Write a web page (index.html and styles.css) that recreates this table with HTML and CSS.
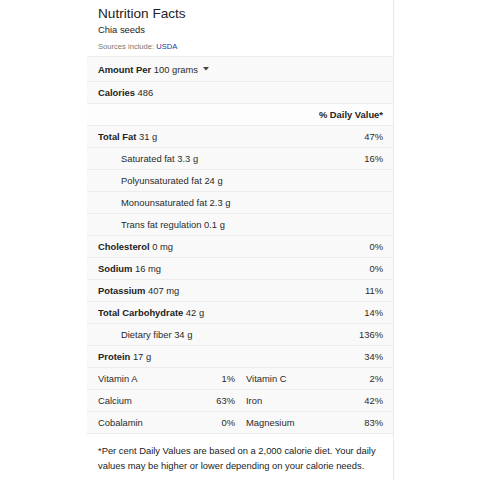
FILE: index.html
```html
<!DOCTYPE html>
<html>
<head>
<meta charset="utf-8">
<link rel="stylesheet" href="styles.css">
</head>
<body>
<div class="card">
  <div class="head">
    <div class="title">Nutrition Facts</div>
    <div class="food">Chia seeds</div>
    <div class="src">Sources include: <span class="link">USDA</span></div>
  </div>
  <div class="row amount"><span><b>Amount Per</b> 100 grams</span><svg class="caret" width="6" height="4" viewBox="0 0 6 4"><path d="M0 0H6L3 3.5Z" fill="#444"/></svg></div>
  <div class="row"><span><b>Calories</b> 486</span></div>
  <div class="row dvhead"><b>% Daily Value*</b></div>
  <div class="row"><span><b>Total Fat</b> 31 g</span><span>47%</span></div>
  <div class="row sub"><span>Saturated fat 3.3 g</span><span>16%</span></div>
  <div class="row sub"><span>Polyunsaturated fat 24 g</span></div>
  <div class="row sub"><span>Monounsaturated fat 2.3 g</span></div>
  <div class="row sub"><span>Trans fat regulation 0.1 g</span></div>
  <div class="row"><span><b>Cholesterol</b> 0 mg</span><span>0%</span></div>
  <div class="row"><span><b>Sodium</b> 16 mg</span><span>0%</span></div>
  <div class="row"><span><b>Potassium</b> 407 mg</span><span>11%</span></div>
  <div class="row"><span><b>Total Carbohydrate</b> 42 g</span><span>14%</span></div>
  <div class="row sub"><span>Dietary fiber 34 g</span><span>136%</span></div>
  <div class="row"><span><b>Protein</b> 17 g</span><span>34%</span></div>
  <div class="row vit"><div class="pair"><span>Vitamin A</span><span>1%</span></div><div class="pair"><span>Vitamin C</span><span>2%</span></div></div>
  <div class="row vit"><div class="pair"><span>Calcium</span><span>63%</span></div><div class="pair"><span>Iron</span><span>42%</span></div></div>
  <div class="row vit"><div class="pair"><span>Cobalamin</span><span>0%</span></div><div class="pair"><span>Magnesium</span><span>83%</span></div></div>
  <div class="foot">*Per cent Daily Values are based on a 2,000 calorie diet. Your daily values may be higher or lower depending on your calorie needs.</div>
</div>
</body>
</html>
```
FILE: styles.css
```css
html, body {
  margin: 0;
  padding: 0;
  background: #fff;
}
body {
  font-family: "Liberation Sans", Arial, sans-serif;
  color: #222;
}
.card {
  margin-left: 87px;
  width: 306px;
  height: 480px;
  border-right: 1px solid #e9e9e9;
  box-sizing: content-box;
}
.head {
  padding: 6px 11px 4px 11px;
  height: 46px;
}
.title {
  font-size: 13.6px;
  line-height: 16px;
  color: #222;
}
.food {
  margin-top: 2px;
  font-size: 9.4px;
  line-height: 12px;
  color: #222;
}
.src {
  margin-top: 6px;
  font-size: 7.6px;
  line-height: 10px;
  color: #777;
}
.link {
  color: #1a3a9c;
}
.row {
  display: flex;
  justify-content: space-between;
  align-items: center;
  height: 21px;
  padding: 0 10px 0 11px;
  background: #f9f9f9;
  border-bottom: 1px solid #ececec;
  font-size: 9.4px;
  color: #2a2a2a;
}
.row b {
  font-weight: bold;
  color: #222;
}
.amount {
  border-top: 1px solid #ececec;
  height: 24px;
  justify-content: flex-start;
  gap: 5px;
}
.caret {
  display: block;
}
.dvhead {
  justify-content: flex-end;
  background: #fdfdfd;
}
.sub {
  padding-left: 34px;
}
.vit {
  display: grid;
  grid-template-columns: 1fr 1fr;
  gap: 11px;
}
.pair {
  display: flex;
  justify-content: space-between;
}
.foot {
  padding: 9px 11px 0 11px;
  font-size: 9.4px;
  line-height: 15px;
  color: #222;
}
```
